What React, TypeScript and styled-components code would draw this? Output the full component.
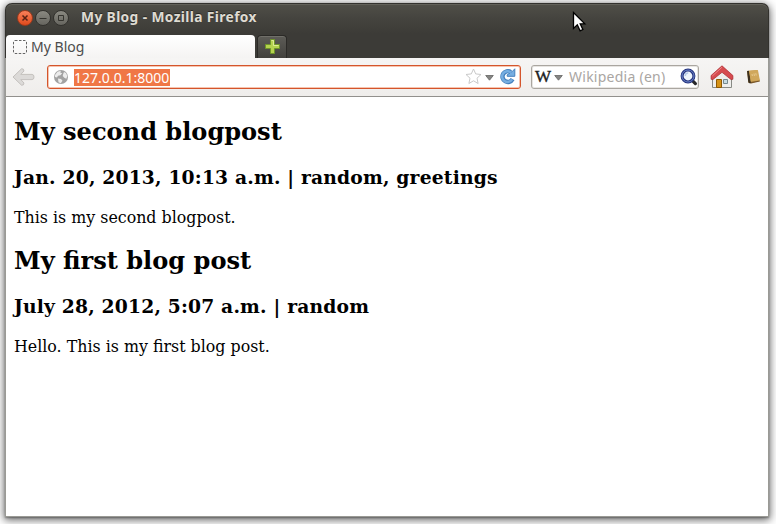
import React from "react";
import styled, { createGlobalStyle } from "styled-components";

const GlobalStyle = createGlobalStyle`
  * { box-sizing: border-box; }
  html, body { margin: 0; height: 100%; background: #fff; overflow: hidden; }
`;

const Desktop = styled.div`
  width: 776px;
  height: 524px;
  padding: 3px 7px 7px 5px;
  background: #fff;
  overflow: hidden;
`;

const BrowserWindow = styled.div`
  display: flex;
  flex-direction: column;
  height: 514px;
  border: 1px solid #9a9a95;
  border-top: 0;
  border-radius: 7px 7px 0 0;
  background: #fff;
  box-shadow: 0 1px 2px rgba(0, 0, 0, 0.3), 0 2px 8px 1px rgba(0, 0, 0, 0.6);
`;

const Chrome = styled.header`
  height: 55px;
  margin: 0 -1px;
  border-radius: 7px 7px 0 0;
  border: 1px solid #33322e;
  border-bottom: 0;
  background: linear-gradient(#504f48 0, #45443f 14px, #3c3b37 30px, #3c3b37 100%);
  box-shadow: inset 0 1px #62615a;
`;

const TitleBar = styled.div`
  display: flex;
  align-items: center;
  gap: 2px;
  height: 28px;
  padding: 0 0 1px 11px;
`;

const RoundButton = styled.button<{ $close?: boolean }>`
  width: 16px;
  height: 16px;
  padding: 0;
  border: 1px solid ${(p) => (p.$close ? "#9c3a1c" : "#32312d")};
  border-radius: 50%;
  background: ${(p) => (p.$close ? "linear-gradient(#f8805a, #df4a1c)" : "linear-gradient(#8a8981, #66655f)")};
  svg { display: block; }
`;

const Title = styled.h1`
  margin: -1px 0 0 10px;
  font: bold 13.8px/20px "Noto Sans", sans-serif;
  letter-spacing: 0.37px;
  color: #dfdbd2;
  text-shadow: 0 -1px #292824;
  white-space: nowrap;
`;

const TabStrip = styled.div`
  display: flex;
  gap: 2px;
  height: 26px;
  padding-top: 3px;
`;

const Tab = styled.div`
  display: flex;
  align-items: center;
  gap: 4px;
  width: 249px;
  height: 23px;
  padding: 0 0 0 7px;
  border-radius: 4px 4px 0 0;
  background: linear-gradient(#fff, #f5f4f3);
  color: #4c4c4c;
  font: 14px/20px "Noto Sans", sans-serif;
  letter-spacing: 0.02px;
`;

const NewTab = styled.button`
  width: 30px;
  height: 23px;
  padding: 0 0 1px 6px;
  border: 1px solid #2b2a27;
  border-bottom: 0;
  border-radius: 4px 4px 0 0;
  background: linear-gradient(#5d5c57, #42413d);
  box-shadow: inset 0 1px #706f69;
  svg { display: block; }
`;

const Toolbar = styled.nav`
  display: flex;
  align-items: center;
  height: 39px;
  padding: 0 0 1px 6px;
  border-bottom: 1px solid #92908d;
  background: linear-gradient(#f6f5f4, #efedeb);
  svg { flex: none; }
`;

const Field = styled.div<{ $width: number; $active?: boolean }>`
  display: flex;
  align-items: center;
  width: ${(p) => p.$width}px;
  height: 24px;
  margin-left: ${(p) => (p.$active ? 11 : 10)}px;
  border: 1px solid ${(p) => (p.$active ? "#d4552c" : "#aaa6a0")};
  border-radius: 3px;
  background: #fff;
  box-shadow: inset 0 0 0 1px ${(p) => (p.$active ? "#f7c4af" : "#e7e5e2")};
  padding-left: ${(p) => (p.$active ? 5 : 3)}px;
`;

const Selection = styled.span`
  width: 96px;
  height: 17px;
  margin: 1px auto 0 5px;
  background: #f07746;
  color: #fff;
  font: 14px/17px "Noto Sans", sans-serif;
  letter-spacing: 0.02px;
  white-space: nowrap;
`;

const Placeholder = styled.span`
  width: 111px;
  margin: 1px 0 0 6px;
  color: #aaa6a3;
  font: 14px/20px "Noto Sans", sans-serif;
  letter-spacing: 0.25px;
  white-space: nowrap;
`;

const WikiMark = styled.span`
  width: 17px;
  margin-top: 1px;
  font: 17px/20px "Liberation Serif", serif;
  -webkit-text-stroke: 0.4px #222;
  color: #222;
`;

const Page = styled.main`
  flex: 1;
  padding: 0 8px;
  color: #000;
  font: 16px/19px "DejaVu Serif", serif;
`;

const Heading = styled.h2`
  margin: 21px 0 20px;
  font-size: 24.08px;
  line-height: 28px;
`;

const Meta = styled.h3`
  margin: 20px 0 21px;
  font-size: 18.72px;
  line-height: 22px;
  letter-spacing: 0.18px;
`;

const Body = styled.p`
  margin: 0 0 -1px;
  font-size: 15.85px;
  line-height: 18px;
`;

const Pointer = styled.svg`
  position: absolute;
  left: 572px;
  top: 11px;
`;

const posts = [
  { title: "My second blogpost", meta: "Jan. 20, 2013, 10:13 a.m. | random, greetings", body: "This is my second blogpost." },
  { title: "My first blog post", meta: "July 28, 2012, 5:07 a.m. | random", body: "Hello. This is my first blog post." },
];

const BackIcon = () => (
  <svg width="24" height="20" viewBox="0 0 24 20">
    <path d="M1 10 9.5 1.8Q11.8 1.3 12 4L8.8 7.4H20q2 0 2 2.6t-2 2.6H8.8L12 16q-.2 2.7-2.5 2.2Z" fill="#dcdad8" stroke="#c4c1be" />
  </svg>
);

const GlobeIcon = () => (
  <svg width="16" height="16" viewBox="0 0 16 16">
    <circle cx="8" cy="8" r="7" fill="#a2a2a2" />
    <path d="M2 6 4.5 2.8 8 1.8l-.8 1.8 2 .7-1.8 2-2.4.5L4 8.5 2 8ZM11 3l2 1 1.3 3-1 2.8-2-1-1.6-1.8.5-2ZM5 9.5l3 .4 1.5 1.8-1.7 2.5-2.3-1Z" fill="#ececec" />
  </svg>
);

const StarIcon = () => (
  <svg width="17" height="17" viewBox="0 0 17 17">
    <path d="m8.5 1 2.2 4.9 5.3.6-4 3.7 1.1 5.3-4.6-2.7-4.6 2.7L5 10.2 1 6.5l5.3-.6Z" fill="#fff" stroke="#c9c9c9" strokeLinejoin="round" />
  </svg>
);

const DropIcon = () => (
  <svg width="9" height="8" viewBox="0 0 9 8">
    <path d="M.7 2.5h7.6L4.5 7.2Z" fill="#858583" stroke="#656563" strokeWidth=".8" />
  </svg>
);

const Spacer = styled.span<{ $w: number }>`
  flex: none;
  width: ${(p) => p.$w}px;
`;

const ReloadIcon = () => (
  <svg width="17" height="17" viewBox="0 0 17 17">
    <path d="M13.6 11.2A5.4 5.4 0 1 1 11.8 4" fill="none" stroke="#4580bd" strokeWidth="4.4" />
    <path d="M15.8.8v7.5H8.2V6.8L11 5V4l2-.2Z" fill="#76aee1" stroke="#4580bd" />
    <path d="M13.1 11.4A5.4 5.4 0 1 1 12 4.4" fill="none" stroke="#76aee1" strokeWidth="2.5" />
  </svg>
);

const SearchIcon = () => (
  <svg width="18" height="18" viewBox="0 0 18 18">
    <path d="m12.4 12.6 3 3" stroke="#27272a" strokeWidth="3.2" strokeLinecap="round" />
    <circle cx="8" cy="8" r="5.9" fill="#eef4fb" stroke="#26347e" strokeWidth="3" />
    <circle cx="8" cy="8" r="6" fill="none" stroke="#6a83c8" strokeWidth="1" />
    <path d="M5.2 8a3 3 0 0 1 3-3" fill="none" stroke="#b4cae8" strokeWidth="1.5" />
  </svg>
);

const HomeIcon = () => (
  <svg width="24" height="24" viewBox="0 0 24 24">
    <path d="M2.5 12 12 4l9.5 8v10.5h-19Z" fill="#eeeeec" stroke="#888a85" />
    <path d="M6.5 14.5h5v8h-5Z" fill="#d59318" stroke="#8f5902" />
    <path d="M13.5 14.5h4v4h-4Z" fill="#c6dbe2" stroke="#75888e" />
    <path d="M12 .8 1.1 10.5v3.8l1.9.2 9-7.2 9 7.2 1.9-.2v-3.8Z" fill="#d64b4f" stroke="#a9262c" strokeWidth=".7" strokeLinejoin="round" />
    <path d="M12 2.2 2.3 11" stroke="#ee8586" />
  </svg>
);

const BookIcon = () => (
  <svg width="16" height="16" viewBox="0 0 16 16">
    <path d="m1 2 10-1 2.7 11-9.2 2.2-2-.4Z" fill="#c49a4c" />
    <path d="m1 2 2-.2 2 12.2-.9.4-1.8-1Z" fill="#3b2f1e" />
    <path d="m3.1 1.8 8.8-.9 2 10.4-9.1 1.3Z" fill="#d0a75b" />
    <path d="m4.8 13 9-1.5v1l-8.8 2Z" fill="#78562a" />
    <path d="m6 5 .4 2M8 4.5 8.4 7m1.4-2.8.4 2.3" stroke="#edd29b" strokeWidth=".8" />
  </svg>
);

export default function App() {
  return (
    <Desktop>
      <GlobalStyle />
      <BrowserWindow>
        <Chrome>
          <TitleBar>
            <RoundButton $close aria-label="Close">
              <svg width="14" height="14"><path d="m4.5 4.5 5 5m0-5-5 5" stroke="#562214" strokeWidth="1.5" /></svg>
            </RoundButton>
            <RoundButton aria-label="Minimize">
              <svg width="14" height="14"><path d="M3.5 7.5h7" stroke="#35342f" /></svg>
            </RoundButton>
            <RoundButton aria-label="Maximize">
              <svg width="14" height="14"><path d="M4.5 4.5h5v5h-5Z" fill="none" stroke="#35342f" /></svg>
            </RoundButton>
            <Title>My Blog - Mozilla Firefox</Title>
          </TitleBar>
          <TabStrip>
            <Tab>
              <svg width="14" height="14"><rect x=".5" y=".5" width="13" height="13" rx="1.5" fill="none" stroke="#666" strokeDasharray="2.5 1.5" /></svg>
              My Blog
            </Tab>
            <NewTab aria-label="New tab">
              <svg width="17" height="17"><path d="M6.5 1.5h4v5h5v4h-5v5h-4v-5h-5v-4h5Z" fill="#b5d34e" stroke="#6f942a" /><path d="M7.5 2.5h2v5h5" fill="none" stroke="#dcec94" /></svg>
            </NewTab>
          </TabStrip>
        </Chrome>
        <Toolbar>
          <BackIcon />
          <Field $width={474} $active>
            <GlobeIcon />
            <Selection>127.0.0.1:8000</Selection>
            <StarIcon />
            <Spacer $w={3} />
            <DropIcon />
            <Spacer $w={5} />
            <ReloadIcon />
            <Spacer $w={4} />
          </Field>
          <Field $width={168}>
            <WikiMark>W</WikiMark>
            <Spacer $w={2} />
            <DropIcon />
            <Placeholder>Wikipedia (en)</Placeholder>
            <SearchIcon />
          </Field>
          <Spacer $w={11} />
          <HomeIcon />
          <Spacer $w={12} />
          <BookIcon />
        </Toolbar>
        <Page>
          {posts.map((post) => (
            <article key={post.title}>
              <Heading>{post.title}</Heading>
              <Meta>{post.meta}</Meta>
              <Body>{post.body}</Body>
            </article>
          ))}
        </Page>
      </BrowserWindow>
      <Pointer width="15" height="22" viewBox="0 0 15 22">
        <path d="M1.5 1.5v16l3.8-3.7 2.8 6 2.8-1.3-2.7-5.7h4.6Z" fill="#fff" stroke="#000" strokeWidth="1.3" />
      </Pointer>
    </Desktop>
  );
}
